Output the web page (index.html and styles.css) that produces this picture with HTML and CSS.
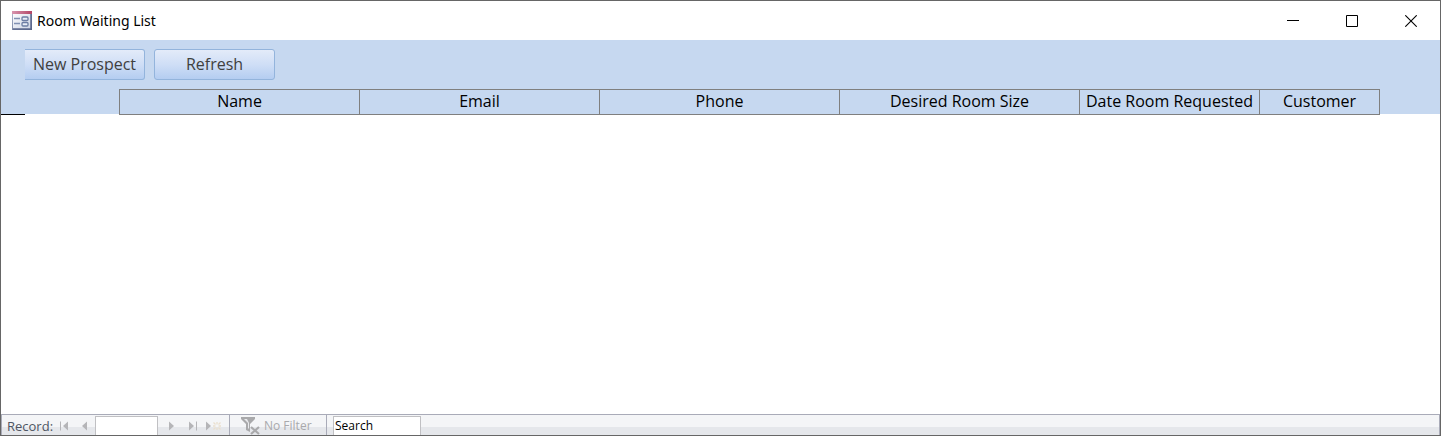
FILE: index.html
```html
<!DOCTYPE html>
<html lang="en">
<head>
<meta charset="utf-8">
<title>Room Waiting List</title>
<link rel="stylesheet" href="styles.css">
</head>
<body>
<div class="window">
  <header class="titlebar">
    <svg class="form-icon" width="20" height="19" viewBox="0 0 20 19" aria-hidden="true">
      <defs>
        <linearGradient id="cap" x1="0" y1="0" x2="1" y2="0"><stop offset="0" stop-color="#d795ae"/><stop offset="1" stop-color="#b34566"/></linearGradient>
        <linearGradient id="paper" x1="0" y1="0" x2="1" y2="1"><stop offset="0" stop-color="#fff"/><stop offset="1" stop-color="#ccd3e4"/></linearGradient>
        <linearGradient id="edge" x1="0" y1="0" x2="1" y2="1"><stop offset="0" stop-color="#b2bbd0"/><stop offset="1" stop-color="#4d5b82"/></linearGradient>
      </defs>
      <rect x="0.5" y="0.5" width="19" height="18" fill="url(#paper)" stroke="url(#edge)"/>
      <path d="M19 3v15H1" fill="none" stroke="#5d6a8e" stroke-width="1.500"/>
      <rect width="20" height="3" fill="url(#cap)"/>
      <path d="M2 7.500h6M2 12.500h6" stroke="#8090b2" stroke-width="1.600"/>
      <rect x="10" y="6" width="6" height="3.500" rx="1" fill="#e8edf7" stroke="#6c7da4" stroke-width="1.300"/>
      <rect x="10" y="11.500" width="6" height="3.500" rx="1" fill="#e8edf7" stroke="#6c7da4" stroke-width="1.300"/>
    </svg>
    <h1 class="title">Room Waiting List</h1>
    <div class="controls">
      <button class="control" aria-label="Minimize"><svg width="12" height="12" viewBox="0 0 12 12"><path d="M0 5.5h12" stroke="#000"/></svg></button>
      <button class="control" aria-label="Maximize"><svg width="12" height="12" viewBox="0 0 12 12"><path d="M.5.5h11v11H.5z" fill="none" stroke="#000"/></svg></button>
      <button class="control" aria-label="Close"><svg width="12" height="12" viewBox="0 0 12 12"><path d="M.3.3l11.400 11.400M11.700.3L.3 11.700" stroke="#000" stroke-width="1.100"/></svg></button>
    </div>
  </header>
  <section class="form-header">
    <div class="actions">
      <button class="action action-first">New Prospect</button>
      <button class="action">Refresh</button>
    </div>
    <table class="columns">
      <colgroup><col class="wide"><col class="wide"><col class="wide"><col class="wide"><col class="medium"><col class="narrow"></colgroup>
      <thead>
        <tr><th>Name</th><th>Email</th><th>Phone</th><th>Desired Room Size</th><th>Date Room Requested</th><th>Customer</th></tr>
      </thead>
    </table>
  </section>
  <main class="records"></main>
  <footer class="navbar">
    <label class="record-label" for="record">Record:</label>
    <button class="nav" aria-label="First record"><svg width="9" height="10" viewBox="0 0 9 10"><path d="M.5.5v9" stroke="#b5b5b8"/><path d="M8 .5v9L3 5z" fill="#b5b5b8"/></svg></button>
    <button class="nav" aria-label="Previous record"><svg width="9" height="10" viewBox="0 0 9 10"><path d="M6 .5v9L1 5z" fill="#b5b5b8"/></svg></button>
    <input class="record-box" id="record" type="text">
    <button class="nav" aria-label="Next record"><svg width="9" height="10" viewBox="0 0 9 10"><path d="M2 .5v9L7 5z" fill="#b5b5b8"/></svg></button>
    <button class="nav" aria-label="Last record"><svg width="9" height="10" viewBox="0 0 9 10"><path d="M1 .5v9L6 5z" fill="#b5b5b8"/><path d="M8.500.5v9" stroke="#b5b5b8"/></svg></button>
    <button class="nav nav-new" aria-label="New record"><svg width="16" height="10" viewBox="0 0 16 10"><path d="M1 .5v9L6 5z" fill="#b5b5b8"/><path d="M12 1v2.500M12 6.500V9M8 5h2.500M13.500 5H16M8.500 1.500l2 2M15.500 1.500l-2 2M8.500 8.500l2-2M15.500 8.500l-2-2" stroke="#eadfce" stroke-width="1.300"/></svg></button>
    <button class="filter">
      <svg width="20" height="20" viewBox="0 0 20 20" aria-hidden="true"><path d="M0 2h14v2L9 9v8l-4-2V9L0 4z" fill="#a9a9ab"/><path d="M3 4h3l2 4v6l-1-1V8z" fill="#e9eaed"/><path d="M10 12l8 7M18 12l-8 7" stroke="#a9a9ab" stroke-width="2.200"/></svg>
      No Filter
    </button>
    <input class="search" type="text" aria-label="Search" value="Search">
  </footer>
</div>
</body>
</html>
```
FILE: styles.css
```css
* { box-sizing: border-box; }
body { margin: 0; background: #fff; color: #000; font-family: "Open Sans", "Noto Sans", sans-serif; }
button { padding: 0; border: 0; background: none; color: inherit; font: inherit; }
svg { display: block; flex: none; }

.window { display: flex; flex-direction: column; min-height: 100vh; border: 1px solid #666; }

.titlebar { display: flex; align-items: center; height: 39px; padding-left: 11px; gap: 5px; }
.form-icon { margin-bottom: 1px; }
.title { flex: 1; margin: 0; font-family: "Noto Sans", sans-serif; font-size: 14px; font-weight: 400; line-height: 20px; }
.controls { display: flex; }
.control { display: flex; align-items: center; justify-content: center; width: 59px; height: 38px; }

.form-header { background: #c6d8f0; padding-top: 9px; }
.actions { display: flex; gap: 9px; padding-left: 24px; }
.action {
  width: 121px; height: 31px; padding-bottom: 2px; border: 1px solid #93b4dc; border-radius: 3px;
  background: linear-gradient(#e3ebf9, #cfdef6 50%, #b4cdf1);
  color: #404040; font-size: 16px; line-height: 20px;
}
.action-first { width: 120px; border-left: 0; border-radius: 0 3px 3px 0; }

.columns { width: 1261px; margin: 9px 0 -1px 118px; table-layout: fixed; border-collapse: collapse; }
.columns th {
  height: 25px; padding: 0 0 2px; border: 1px solid #7f7f7f; background: #c6d8f0;
  font-size: 16px; font-weight: 400; line-height: 20px; white-space: nowrap;
}
.wide { width: 240px; }
.medium { width: 180px; }
.narrow { width: 120px; }

.records { flex: 1; }
.records::before { content: ""; display: block; width: 24px; height: 1px; background: #000; }

.navbar {
  display: flex; align-items: stretch; height: 21px; padding-left: 5px;
  border: 1px solid #a9abb8; border-bottom: 0;
  background: linear-gradient(#f4f5f7 12px, #e5e7eb 12px);
  font-size: 13px; line-height: 22px;
}
.record-label { width: 49px; color: #4f5563; font-size: 13px; white-space: nowrap; }
.nav { display: flex; align-items: center; justify-content: center; width: 16px; margin-right: 5px; padding-top: 1px; }
.record-box, .search { border: 1px solid #c0c0c3; border-bottom: 0; margin-top: 1px; background: #fff; font: inherit; outline: 0; }
.record-box { width: 63px; padding: 0 2px; margin-right: 5px; margin-left: -3px; }
.nav-new { margin-right: 8px; }
.filter {
  display: flex; width: 98px; padding-left: 11px; gap: 3px;
  border: 1px solid #a9abb8; border-width: 0 1px; color: #a9a9ac; font-size: 12px; line-height: 22px; white-space: nowrap;
}
.search { width: 88px; margin-left: 6px; padding: 0 1px; color: #000; font-size: 12px; line-height: 18px; }
```
